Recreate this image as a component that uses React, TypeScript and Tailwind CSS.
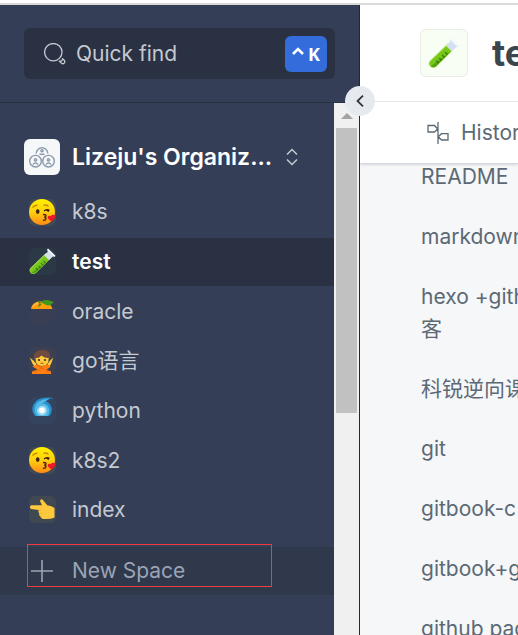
import React from 'react';

function KissEmoji() {
  return (
    <svg viewBox="0 0 27 27" className="size-full" aria-hidden="true">
      <defs>
        <linearGradient id="kissFace" x1="0" y1="0" x2="0" y2="1">
          <stop offset="0" stopColor="#fff200" />
          <stop offset="0.5" stopColor="#ffcf10" />
          <stop offset="1" stopColor="#ff8a12" />
        </linearGradient>
      </defs>
      <circle cx="13" cy="13" r="13" fill="url(#kissFace)" />
      <path d="M3.5 8.5Q5.5 6 8.5 6.2M14.5 6.5Q17 5.4 19.5 7.2" stroke="#c98a00" strokeWidth="1.5" fill="none" />
      <ellipse cx="8.7" cy="12.6" rx="1.8" ry="2.4" fill="#3b2412" />
      <path d="M15 12Q17.5 9.7 20.5 11.2M16.5 10.6L20 12.3" stroke="#3b2412" strokeWidth="1.3" fill="none" />
      <path d="M14 15.5Q17.8 15.4 16.8 17.4Q16.4 18.3 15.2 18.3Q17.6 18.6 16.7 20.4Q16 21.6 14 21.3" stroke="#4b2410" strokeWidth="1.4" fill="none" />
      <path d="M22.3 22.8L19 19.4C17.8 17.6 20 15.8 21.7 17.2C22.8 15 26 15.2 26.3 17.3C26.5 19.6 24.3 21.4 22.3 22.8Z" fill="#f01828" />
    </svg>
  );
}

function TubeEmoji() {
  return (
    <svg viewBox="0 0 27 27" className="size-full" aria-hidden="true">
      <path d="M17 5L22 10L7 25Q4.5 27 2 25.2Q-.5 22.5 1.5 20Z" fill="#b6e86a" />
      <path d="M15.5 7.5L19.8 11.8L7 24.5Q4.5 26.5 2.3 24.7Q.2 22.5 2 20.5Z" fill="#78c81c" />
      <path d="M19.8 11.8L7 24.5Q4.5 26.5 2.3 24.7Z" fill="#52a50c" />
      <path d="M7 20L9 22M9.5 17.8L11.5 19.8M12 15.2L14 17.2M14.5 12.8L16.5 14.8" stroke="#38780c" strokeWidth="1.2" />
      <path d="M18.5 1.2L26 8.3L23.7 8.7L20 12L15.3 7.3L18.6 4Z" fill="#d4e0ef" />
      <path d="M18.5 1.2L26 8.3" stroke="#f3f7fc" strokeWidth="1.6" />
    </svg>
  );
}

function OrangeEmoji() {
  return (
    <svg viewBox="0 0 27 27" className="size-full" aria-hidden="true">
      <path d="M2 11Q3 4 10 3.5Q21 2.5 23.5 11Z" fill="#ff9d0c" />
      <path d="M4 9Q7 4.5 10 5" stroke="#ffb83f" strokeWidth="1.5" fill="none" />
      <path d="M11.5 4Q17 0 24.7 4.3Q20 10 14.5 5.5L12.5 4.8Z" fill="#3f9a1c" />
      <path d="M8.5 3L11 5L10.3 7.7L12 6.2" stroke="#4c8b14" strokeWidth="1.3" fill="none" />
    </svg>
  );
}

function NoGestureEmoji() {
  return (
    <svg viewBox="0 0 27 27" className="size-full" aria-hidden="true">
      <path d="M5 12Q3.5 3 13 3Q22.5 3 21.2 12Z" fill="#704b3e" />
      <path d="M6.5 11Q10 11.5 12.5 8.5Q16 11.5 19.7 11Q20 19 13 19Q6.2 19 6.5 11Z" fill="#ffc83d" />
      <circle cx="10" cy="13" r="1.1" fill="#472f25" />
      <circle cx="16" cy="13" r="1.1" fill="#472f25" />
      <path d="M11.5 16.3H14.5" stroke="#a76019" />
      <path d="M.8 10.8L4 13L7.5 17L6 20L3.7 17ZM24.2 10.8L21.5 13L18.5 17L20 20L22 17Z" fill="#ffc83d" />
      <path d="M3.5 19.5L8 17.2L13 19.6L18 17.2L21.8 19.5L17.5 22.8L22 24.5V27H3V24.5L8.5 22.5Z" fill="#ff7f10" />
      <path d="M8 18L19.5 25M13 21L5 25.5" stroke="#df620d" strokeWidth=".7" />
    </svg>
  );
}

function CycloneEmoji() {
  return (
    <svg viewBox="0 0 27 27" className="size-full" aria-hidden="true">
      <path d="M24.7 1Q8.5-1 4.5 7.5Q1.5 13.5 6 19H20.5Q24.5 14 21.5 8Q19.3 4.7 16 4Q20 1.5 24.7 1Z" fill="#2390cf" />
      <path d="M20 2Q10 1.8 6.5 8.5Q4.2 14 8 19H18.5Q22 14.3 19 9.3Q16.2 5.6 12.2 7" fill="#55b9e6" />
      <path d="M18 14Q17 18.3 12.5 18.2Q7.5 16.8 8.3 12.4Q10.5 7.7 15.5 9.3Q18.2 11 18 14Z" fill="#a2def6" />
      <circle cx="13" cy="13.2" r="2.8" fill="#fff" />
    </svg>
  );
}

function PointEmoji() {
  return (
    <svg viewBox="0 0 27 27" className="size-full" aria-hidden="true">
      <path d="M2 9.2H13L11 5Q11.2 2.8 13.2 3.2L18.5 9.5Q23.5 10 25.5 12.2V21.5Q21.5 23.5 14 22.9Q11.5 22.4 11.5 20.5Q9.5 19.5 10.4 17.5Q8.7 16.2 9.8 14L2 13Q-.2 11 2 9.2Z" fill="#ffc83d" />
      <path d="M9.8 14H13M10.4 17.5H13M11.5 20.5H13.5" stroke="#edac28" strokeWidth=".7" />
    </svg>
  );
}

function SearchIcon() {
  return (
    <svg viewBox="0 0 22 22" className="size-[22px] shrink-0" fill="none" stroke="currentColor" strokeWidth="1.3" aria-hidden="true">
      <circle cx="9.3" cy="9.2" r="8.7" />
      <path d="M18.6 15.6l1.6 1.7a1.9 1.9 0 0 1-2.8 2.8l-2-1.9q3.2.4 3.2-2.6Z" strokeLinejoin="round" />
    </svg>
  );
}

function OrgIcon() {
  const person = (
    <>
      <circle r="5.8" />
      <circle cy="-1.3" r="1.1" />
      <path d="M-2.6 3.2Q0 .5 2.6 3.2" />
    </>
  );
  return (
    <svg viewBox="0 0 36 36" className="size-full" fill="none" stroke="#8c9cac" strokeWidth="1.4" aria-hidden="true">
      <path d="M12.2 14.5a5.8 5.8 0 1 1 11.6 0M15.5 15.3h5" />
      <circle cx="18" cy="11.7" r="1.1" />
      <g transform="translate(11.5 22.2)">{person}</g>
      <g transform="translate(24.5 22.2)">{person}</g>
    </svg>
  );
}

const spaces = [
  { name: 'k8s', icon: <KissEmoji />, tile: 'bg-[#434a53]' },
  { name: 'test', icon: <TubeEmoji />, tile: 'bg-[#2b3845]', active: true },
  { name: 'oracle', icon: <OrangeEmoji />, tile: 'bg-[#383f54]' },
  { name: 'go语言', icon: <NoGestureEmoji />, tile: 'bg-[#3c4050]' },
  { name: 'python', icon: <CycloneEmoji />, tile: 'bg-[#34445f]' },
  { name: 'k8s2', icon: <KissEmoji />, tile: 'bg-[#434a53]' },
  { name: 'index', icon: <PointEmoji />, tile: 'bg-[#404850]' },
];

const pages = ['README', 'markdown', 'hexo +github\n客', '科锐逆向课', 'git', 'gitbook-c', 'gitbook+g', 'github pages'];

function Sidebar() {
  return (
    <aside className="relative z-10 flex w-[360px] shrink-0 flex-col border-r border-[#20293c] bg-[#343e56] text-[#c5c9d1]">
      <div className="border-b border-[#293143] pt-[23px] pr-6 pb-[23px] pl-6">
        <button className="flex h-[51px] w-full items-center rounded-md bg-[#293143] pr-2 pl-5">
          <SearchIcon />
          <span className="ml-2.5 flex-1 text-left">Quick find</span>
          <kbd className="flex h-9 w-[42px] items-center justify-center gap-1 rounded-md bg-[#346ddb] font-['Open_Sans','Noto_Sans',sans-serif] text-lg font-bold text-white">
            <svg viewBox="0 0 12 16" className="h-4 w-3" fill="none" stroke="currentColor" strokeWidth="2.6" aria-hidden="true">
              <path d="M1 8L6 3L11 8" />
            </svg>
            <span>K</span>
          </kbd>
        </button>
      </div>

      <div className="flex min-h-0 flex-1">
        <div className="min-w-0 flex-1 overflow-hidden pt-9">
          <button className="flex h-9 w-full items-center pl-6 text-[23px] font-semibold text-white">
            <span className="size-9 rounded-md bg-[#f5f7f9]">
              <OrgIcon />
            </span>
            <span className="ml-3 whitespace-nowrap">Lizeju's Organiz...</span>
            <svg viewBox="0 0 12 18" className="ml-3.5 h-[18px] w-3 shrink-0 text-[#c5c9d1]" fill="none" stroke="currentColor" strokeWidth="1.5" aria-hidden="true">
              <path d="M1 6.5L6 1.5L11 6.5M1 11.5L6 16.5L11 11.5" />
            </svg>
          </button>

          <nav className="mt-[13px] flex h-[346px] flex-col justify-between">
            {spaces.map((space) => (
              <a
                key={space.name}
                href="#"
                className={`flex h-12 shrink-0 items-center gap-4 pl-[29px] ${space.active ? 'bg-[#293143] font-semibold text-white' : ''}`}
              >
                <span className={`size-[27px] rounded-md ${space.tile}`}>{space.icon}</span>
                {space.name}
              </a>
            ))}
          </nav>

          <div className="relative mt-[13px]">
            <button className="flex h-12 w-full items-center gap-[19px] bg-[#30384b] pl-[31px] text-[#9aa4b5]">
              <svg viewBox="0 0 22 22" className="size-[22px]" stroke="currentColor" strokeWidth="1.6" aria-hidden="true">
                <path d="M11 0V22M0 11H22" />
              </svg>
              New Space
            </button>
            <div className="pointer-events-none absolute -top-[3px] left-[27px] h-[43px] w-[245px] border border-[#f23b3f]" />
          </div>
        </div>

        <div className="flex w-[25px] shrink-0 flex-col items-center bg-[#f0f0f0] pt-2.5" aria-hidden="true">
          <svg viewBox="0 0 12 6" className="h-1.5 w-3">
            <path d="M0 6L6 0L12 6Z" fill="#a3a3a3" />
          </svg>
          <div className="mt-[9px] h-[285px] w-[21px] bg-[#c1c1c1]" />
        </div>
      </div>

      <button
        aria-label="Collapse sidebar"
        className="absolute top-[81px] -right-4 flex size-[30px] items-center justify-center rounded-full bg-[#e6eaee] text-[#30363c]"
      >
        <svg viewBox="0 0 8 12" className="h-3 w-2" fill="none" stroke="currentColor" strokeWidth="1.8" aria-hidden="true">
          <path d="M7 .7L1.5 6L7 11.3" />
        </svg>
      </button>
    </aside>
  );
}

function Content() {
  return (
    <main className="flex min-w-0 flex-1 flex-col overflow-hidden bg-[#f5f7f9] whitespace-nowrap text-[#5c6975]">
      <header className="border-b border-[#d3dae3] bg-white shadow-sm">
        <div className="flex h-[97px] items-center gap-6 border-b border-[#e3e6ea] pl-[60px]">
          <span className="flex size-12 shrink-0 items-center justify-center rounded-md border border-[#e8eee4] bg-[#f8fef4]">
            <span className="size-8">
              <TubeEmoji />
            </span>
          </span>
          <h1 className="text-4xl font-bold text-[#3b454e]">test</h1>
        </div>
        <button className="flex h-[61px] items-center gap-3 pl-[67px]">
          <svg viewBox="0 0 22 22" className="size-[22px] shrink-0" fill="none" stroke="currentColor" strokeWidth="1.3" aria-hidden="true">
            <path d="M11 0V22M1 3.5H7.5L10.7 7L7.5 10H1ZM21 11.7H14.5L11.3 14.8L14.5 18H21Z" />
          </svg>
          History
        </button>
      </header>
      <ul className="-mt-[3px] flex min-h-0 flex-1 flex-col gap-7 overflow-hidden pl-[61px] leading-8">
        {pages.map((page) => (
          <li key={page}>
            <a href="#" className="block whitespace-pre">
              {page}
            </a>
          </li>
        ))}
      </ul>
    </main>
  );
}

export default function App() {
  return (
    <div className="flex h-screen flex-col overflow-hidden bg-white pt-[3px] font-[Inter,'Noto_Sans_CJK_SC',sans-serif] text-[21px]">
      <div className="flex min-h-0 flex-1 border-t-2 border-[#d9d9d9]">
        <Sidebar />
        <Content />
      </div>
    </div>
  );
}
